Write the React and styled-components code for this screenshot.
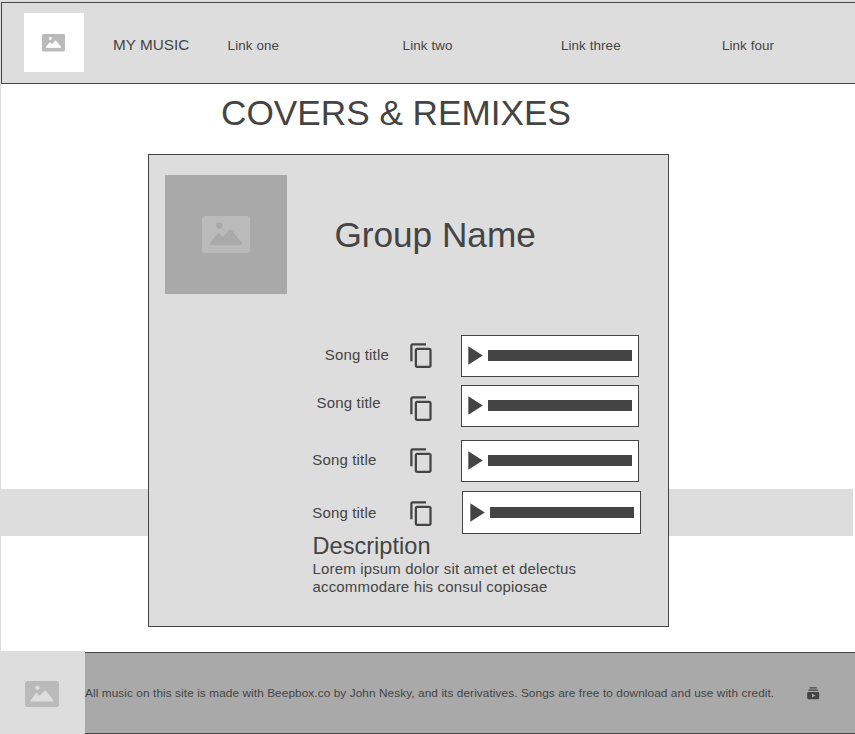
import React from 'react';
import styled, { createGlobalStyle } from 'styled-components';
import { MdContentCopy, MdSubscriptions } from 'react-icons/md';

const INK = '#444444';
const PANEL = '#dddddd';
const MID = '#a9a9a9';
const SOFT = '#bababa';

const GlobalStyle = createGlobalStyle`
  * { box-sizing: border-box; }
  body {
    margin: 0;
    background: #fff;
    overflow: hidden;
    color: ${INK};
    font-family: "Liberation Sans", Arial, sans-serif;
  }
`;

const Page = styled.div`
  width: 855px;
  height: 734px;
  display: flex;
  flex-direction: column;
  overflow: hidden;
`;

const HeaderFrame = styled.div`
  flex: none;
  height: 84px;
  padding: 2px 0 0 1px;
  background: ${PANEL};
`;

const Header = styled.header`
  height: 82px;
  display: flex;
  align-items: flex-start;
  border: 1px solid ${INK};
  border-right: 0;
  padding: 10px 0 0 22px;
`;

const Picture = styled.div`
  flex: none;
  width: ${(p) => p.$w}px;
  height: ${(p) => p.$h}px;
  padding: ${(p) => p.$pad};
  background: ${(p) => p.$bg};
`;

const PictureSvg = styled.svg`
  display: block;
`;

const Label = styled.div`
  margin: 0;
  font-weight: 400;
  font-size: ${(p) => p.$size}px;
  line-height: ${(p) => p.$line}px;
  letter-spacing: ${(p) => p.$track || 0}px;
  white-space: nowrap;
`;

const Brand = styled(Label)`
  width: 114.6px;
  margin: 23px 0 0 29px;
`;

const Nav = styled.nav`
  display: grid;
  grid-template-columns: 175px 158.3px 161px 100px;
  margin-top: 24px;
`;

const NavLink = styled.a`
  font-size: 13.4px;
  line-height: 18px;
  letter-spacing: 0.1px;
  white-space: nowrap;
`;

const Main = styled.main`
  flex: none;
  height: 567px;
  border-left: 1px solid ${PANEL};
  display: grid;
  grid-template-rows: 70px 497px;
  grid-template-columns: 100%;
`;

const Title = styled(Label)`
  padding: 9px 0 0 220px;
`;

const Band = styled.div`
  grid-row: 2;
  grid-column: 1;
  width: 852px;
  height: 47px;
  margin-top: 335px;
  background: ${PANEL};
`;

const Card = styled.section`
  grid-row: 2;
  grid-column: 1;
  width: 521px;
  height: 473px;
  margin-left: 147px;
  border: 1px solid ${INK};
  background: ${PANEL};
  z-index: 1;
`;

const CardHead = styled.div`
  height: 180px;
  display: flex;
  padding: 20px 0 0 16px;
`;

const GroupName = styled(Label)`
  margin: 40px 0 0 47.4px;
`;

const SongRow = styled.div`
  display: flex;
  align-items: flex-start;
  height: ${(p) => p.$h}px;
`;

const SongTitle = styled(Label)`
  flex: none;
  width: 258.6px;
  padding: ${(p) => p.$top}px 0 0 ${(p) => p.$left}px;
`;

const CopyButton = styled.div`
  flex: none;
  width: 27.4px;
  height: 27px;
  margin-top: ${(p) => p.$top}px;
  svg {
    display: block;
    width: 27px;
    height: 27px;
  }
`;

const Player = styled.div`
  flex: none;
  display: flex;
  align-items: flex-start;
  width: ${(p) => (p.$last ? 179 : 178)}px;
  height: ${(p) => (p.$last ? 43 : 42)}px;
  margin-left: ${(p) => (p.$last ? 27 : 26)}px;
  padding: ${(p) => (p.$last ? '11px 0 0 7px' : '10px 0 0 6px')};
  border: 1px solid ${INK};
  background: #fff;
`;

const PlayShape = styled.svg`
  display: block;
  width: 15px;
  height: 19px;
`;

const Track = styled.div`
  width: 144px;
  height: 11px;
  margin: 4px 0 0 5px;
  background: ${INK};
`;

const Description = styled.div`
  width: 300px;
  margin: -1px 0 0 163.5px;
`;

const Footer = styled.footer`
  flex: none;
  height: 83px;
  display: flex;
`;

const FooterBar = styled.div`
  flex: 1;
  height: 82px;
  margin-top: 1px;
  display: flex;
  align-items: flex-start;
  background: ${MID};
  border: solid ${INK};
  border-width: 1px 0;
`;

const Credit = styled(Label)`
  width: 721px;
  padding-top: 31px;
`;

const FooterIcon = styled(MdSubscriptions)`
  display: block;
  width: 14.4px;
  height: 14.4px;
  margin-top: 32.8px;
`;

function PictureIcon({ width, height, cut }) {
  return (
    <PictureSvg width={width} height={height} viewBox="0 0 48 37" preserveAspectRatio="none">
      <rect width="48" height="37" rx="3" fill={SOFT} />
      <circle cx="17.4" cy="9.6" r="3.1" fill={cut} />
      <path
        d="M9 27.5 16.4 18.2 20.7 22.8 28.3 14.2 39 27.3V28.3H9Z"
        fill={cut}
        stroke={cut}
        strokeWidth="2"
        strokeLinejoin="round"
      />
    </PictureSvg>
  );
}

const links = ['Link one', 'Link two', 'Link three', 'Link four'];

const songs = [
  { h: 50, left: 175.8, top: 11, copy: 7 },
  { h: 55, left: 167.6, top: 9, copy: 10 },
  { h: 51, left: 163.3, top: 11, copy: 7 },
  { h: 43, left: 163.3, top: 13, copy: 9, last: true },
];

export default function App() {
  return (
    <Page>
      <GlobalStyle />
      <HeaderFrame>
        <Header>
          <Picture $w={60} $h={59} $pad="21px 0 0 18px" $bg="#fff">
            <PictureIcon width={23} height={17.5} cut="#fff" />
          </Picture>
          <Brand $size={15.3} $line={18}>MY MUSIC</Brand>
          <Nav>
            {links.map((l) => <NavLink key={l}>{l}</NavLink>)}
          </Nav>
        </Header>
      </HeaderFrame>
      <Main>
        <Title as="h1" $size={35.2} $line={40}>COVERS &amp; REMIXES</Title>
        <Band />
        <Card>
          <CardHead>
            <Picture $w={122} $h={119} $pad="41px 0 0 37px" $bg={MID}>
              <PictureIcon width={48} height={37} cut={MID} />
            </Picture>
            <GroupName as="h2" $size={35.2} $line={40}>Group Name</GroupName>
          </CardHead>
          {songs.map((s, i) => (
            <SongRow key={i} $h={s.h}>
              <SongTitle $size={15} $line={18} $track={0.16} $top={s.top} $left={s.left}>
                Song title
              </SongTitle>
              <CopyButton $top={s.copy}><MdContentCopy /></CopyButton>
              <Player $last={s.last}>
                <PlayShape viewBox="0 0 15 19">
                  <path d="M0.3 0.2 14.8 9.5 0.3 18.8Z" fill={INK} />
                </PlayShape>
                <Track />
              </Player>
            </SongRow>
          ))}
          <Description>
            <Label as="h3" $size={23.6} $line={27}>Description</Label>
            <Label $size={15} $line={18} $track={0.16}>
              Lorem ipsum dolor sit amet et delectus
              <br />
              accommodare his consul copiosae
            </Label>
          </Description>
        </Card>
      </Main>
      <Footer>
        <Picture $w={85} $h={83} $pad="29.5px 0 0 25px" $bg={PANEL}>
          <PictureIcon width={34} height={26} cut={PANEL} />
        </Picture>
        <FooterBar>
          <Credit $size={11.8} $line={18} $track={0.088}>
            All music on this site is made with Beepbox.co by John Nesky, and its derivatives. Songs are free to download and use with credit.
          </Credit>
          <FooterIcon />
        </FooterBar>
      </Footer>
    </Page>
  );
}
